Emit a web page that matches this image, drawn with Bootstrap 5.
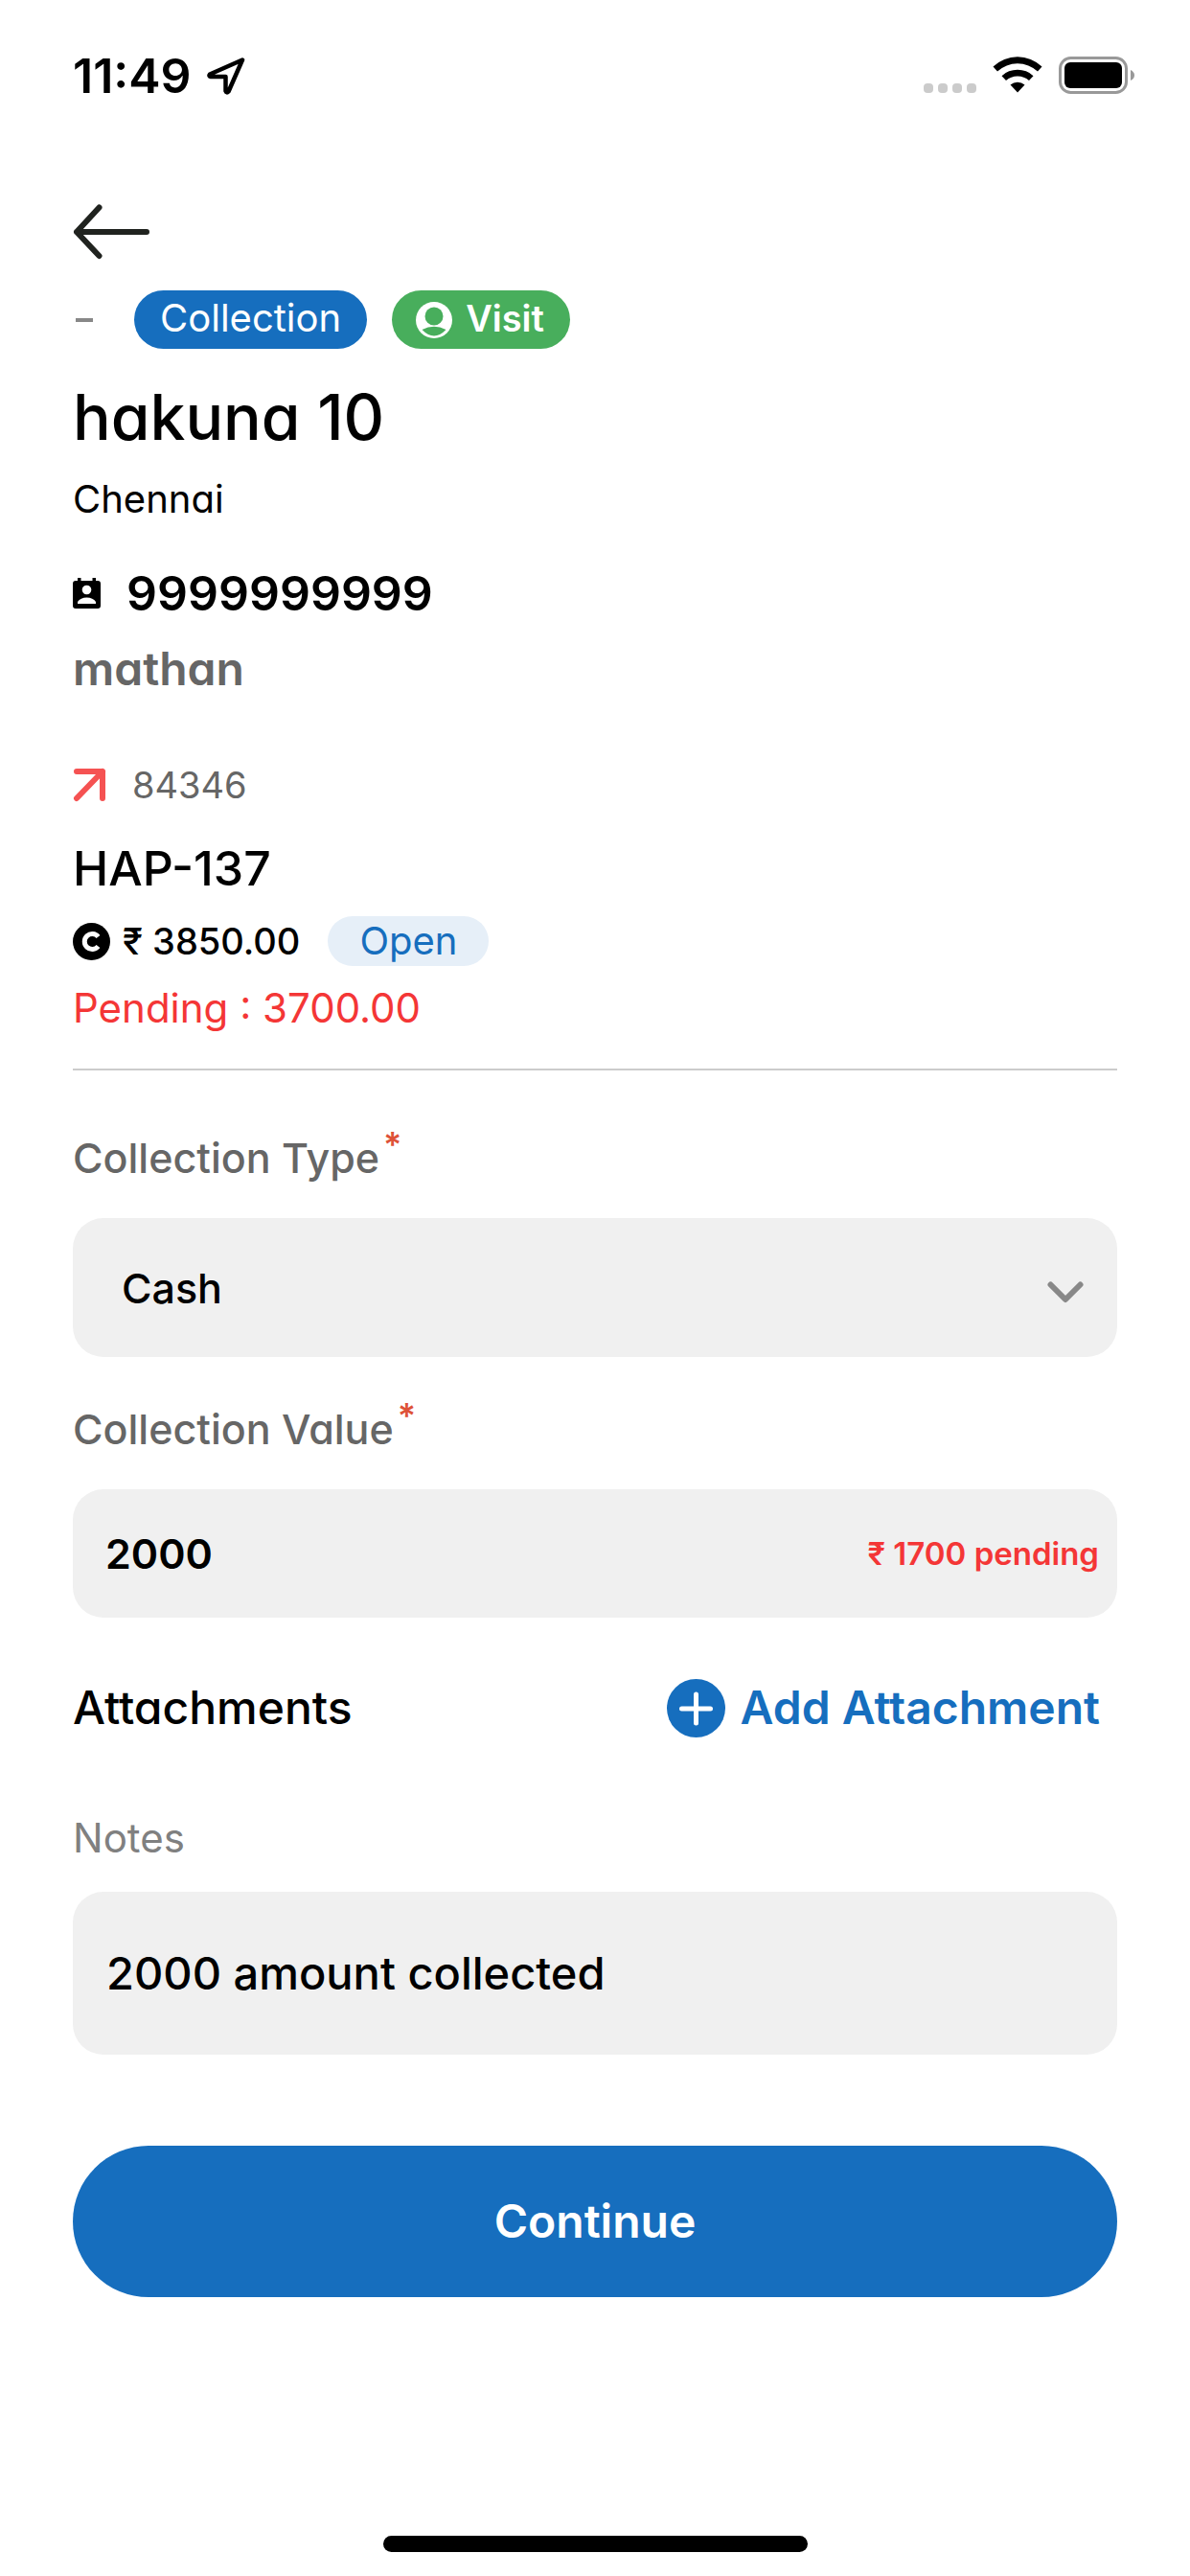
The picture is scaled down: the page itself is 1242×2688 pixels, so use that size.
<!DOCTYPE html>
<html lang="en">
<head>
<meta charset="utf-8">
<meta name="viewport" content="width=device-width, initial-scale=1">
<title>Collection</title>
<link href="https://cdn.jsdelivr.net/npm/bootstrap@5.3.0/dist/css/bootstrap.min.css" rel="stylesheet">
<style>
  :root { --brand: #166ebe; --field: #f0f0f0; --muted: #666; --alert: #f43636; }
  body { font-family: Inter, "Noto Sans", sans-serif; font-feature-settings: "cv11"; color: #000; background: #fff; }
  svg { display: block; flex: none; }
  .gutter { padding-left: 76px; padding-right: 76px; }
  .status { height: 158px; padding-right: 57px; }
  .status-icons { gap: 16px; }
  .screen { padding-top: 55px; }
  .fs-title { font-size: 66px; line-height: 80px; font-weight: 500; margin: 31px 0 22px; }
  .fs-xl { font-size: 50px; line-height: 60px; }
  .fs-lg { font-size: 48px; line-height: 58px; }
  .fs-entry { font-size: 47px; line-height: 58px; }
  .fs-label { font-size: 43px; line-height: 54px; }
  .fs-md { font-size: 40px; line-height: 48px; }
  .fs-note { font-size: 42px; line-height: 50px; }
  .fs-sm { font-size: 38px; line-height: 48px; }
  .fs-xs { font-size: 33px; line-height: 40px; }
  .fw-mid { font-weight: 500; }
  .c-muted { color: var(--muted); }
  .c-soft { color: #808080; }
  .c-alert { color: var(--alert); }
  .c-brand { color: var(--brand); }
  .tags { margin-top: 32px; gap: 26px; }
  .dash { width: 18px; height: 4px; background: #888; margin: 0 17px 0 3px; }
  .tag { height: 61px; padding-bottom: 3px; color: #fff; }
  .tag-collection { background: var(--brand); padding-left: 27px; padding-right: 27px; }
  .tag-visit { background: #48ae5c; padding-left: 25px; padding-right: 27px; gap: 14px; }
  .phone { margin-top: 44px; gap: 27px; }
  .person { margin-top: 20px; }
  .ref { margin-top: 68px; gap: 27px; }
  .bill { margin-top: 33px; }
  .amount { margin-top: 20px; gap: 13px; }
  .state { background: #e6eff8; height: 52px; padding: 0 33px; margin-left: 16px; line-height: 52px; }
  .due { margin-top: 19px; }
  .rule { margin: 38px 0 64px; border-top: 2px solid #ccc; opacity: 1; }
  .req { color: #de5238; font-size: 36px; font-weight: 600; line-height: 26px; margin-left: 4px; }
  .box { background: var(--field); border-radius: 32px; margin-top: 36px; }
  .box select, .box input { border: 0; background: transparent; appearance: none; color: #000; outline: 0; padding: 0; min-width: 0; }
  .box-type { height: 145px; padding: 0 35px 0 51px; margin-bottom: 48px; }
  .box-value { height: 134px; padding: 0 19px 0 34px; }
  .box-notes { height: 170px; padding: 0 35px; margin-top: 31px; }
  .attach { margin-top: 63px; margin-bottom: 80px; padding-right: 18px; }
  .attach button { gap: 16px; height: 62px; }
  .go { background: var(--brand); color: #fff; height: 158px; margin-top: 95px; }
  .home { width: 443px; height: 17px; background: #000; margin-bottom: 25px; }
</style>
</head>
<body>
<div class="min-vh-100 d-flex flex-column">
  <header class="status gutter d-flex align-items-center justify-content-between">
    <div class="d-flex align-items-center gap-3">
      <span class="fs-xl fw-semibold">11:49</span>
      <svg width="40" height="40" viewBox="0 0 40 40" fill="none" stroke="#000" stroke-width="4.500" stroke-linejoin="round" aria-hidden="true"><path d="M37 3.500 3 18.500Q1.500 20.500 4 21H19.500V36Q20.500 38.500 22.500 36.500Z"/></svg>
    </div>
    <div class="status-icons d-flex align-items-center">
      <svg width="55" height="40" viewBox="0 0 55 40" fill="#cbcbcb" aria-hidden="true"><rect y="28" width="10" height="10" rx="4"/><rect x="15" y="28" width="10" height="10" rx="4"/><rect x="30" y="28" width="10" height="10" rx="4"/><rect x="45" y="28" width="10" height="10" rx="4"/></svg>
      <svg width="54" height="40" viewBox="0 0 54 40" aria-hidden="true">
        <path d="M1.500 10.500A37 37 0 0 1 52.500 10.500L48 15.500A31 31 0 0 0 6 15.500Z"/>
        <path d="M10.500 20.200A24 24 0 0 1 43.500 20.200L39 25A18 18 0 0 0 15 25Z"/>
        <path d="M19.500 29.500A11.500 11.500 0 0 1 34.500 29.500L27 37.500Z"/>
      </svg>
      <svg width="80" height="40" viewBox="0 0 80 40" aria-hidden="true"><rect x="1.500" y="1.500" width="69" height="36" rx="11" fill="none" stroke="#999" stroke-width="3"/><rect x="6" y="6" width="60" height="27" rx="6"/><path d="M75 14V25Q79 23 79 19.500T75 14Z" fill="#999"/></svg>
    </div>
  </header>

  <main class="screen gutter">
    <a href="#" class="d-inline-block align-top" aria-label="Back">
      <svg width="81" height="58" viewBox="0 0 81 58" fill="none" stroke="#20231f" stroke-width="6" stroke-linecap="round" stroke-linejoin="round"><path d="M77 29H4M27.500 3.500 4 29 27.500 54"/></svg>
    </a>

    <div class="tags d-flex align-items-center">
      <span class="dash"></span>
      <span class="tag tag-collection fs-md rounded-pill d-flex align-items-center">Collection</span>
      <span class="tag tag-visit fs-sm fw-semibold rounded-pill d-flex align-items-center">
        <svg class="mt-1" width="38" height="38" viewBox="0 0 38 38" aria-hidden="true"><circle cx="19" cy="19" r="19" fill="#fff"/><circle cx="19" cy="15" r="9.500" fill="#48ae5c"/><path d="M6.500 29Q19 22.500 31.500 29 19 42 6.500 29Z" fill="#48ae5c"/></svg>
        Visit
      </span>
    </div>

    <h1 class="fs-title">hakuna 10</h1>
    <div class="fs-md">Chennai</div>
    <div class="phone d-flex align-items-center">
      <svg width="29" height="32" viewBox="0 0 29 32" aria-hidden="true"><path d="M5 0H8.500V3H20.500V0H24V3H26Q29 3 29 6V29Q29 32 26 32H3Q0 32 0 29V6Q0 3 3 3H5Z"/><circle cx="14.500" cy="12.500" r="4.800" fill="#fff"/><path d="M5 27V25Q8 20.500 14.500 20.500T24 25V27Z" fill="#fff"/></svg>
      <span class="fs-xl fw-semibold">9999999999</span>
    </div>
    <div class="person fs-lg fw-semibold c-muted">mathan</div>

    <div class="ref d-flex align-items-center">
      <svg width="35" height="36" viewBox="0 0 35 36" fill="none" stroke="#f55252" stroke-width="6" stroke-linecap="round" stroke-linejoin="round" aria-hidden="true"><path d="M4 4H31V32M31 4 4 32"/></svg>
      <span class="fs-sm c-muted">84346</span>
    </div>
    <div class="bill fs-xl fw-mid">HAP-137</div>
    <div class="amount d-flex align-items-center">
      <svg width="39" height="39" viewBox="0 0 39 39" aria-hidden="true"><circle cx="19.500" cy="19.500" r="19.500"/><path d="M26.500 14.500A8 8 0 1 0 26.500 24.500" fill="none" stroke="#fff" stroke-width="5"/></svg>
      <span class="fs-sm fw-mid">₹ 3850.00</span>
      <span class="state fs-md c-brand rounded-pill">Open</span>
    </div>
    <div class="due fs-note c-alert">Pending : 3700.00</div>

    <hr class="rule">

    <form>
      <label for="type" class="fs-label fw-mid c-muted d-flex align-items-start">Collection Type<span class="req">*</span></label>
      <div class="box box-type d-flex align-items-center">
        <select id="type" class="flex-grow-1 fs-label fw-mid"><option>Cash</option></select>
        <svg width="38" height="32" viewBox="0 0 38 32" fill="none" stroke="#888" stroke-width="6" stroke-linecap="round" stroke-linejoin="round" aria-hidden="true"><path d="M3.500 12.500 19 28 34.500 12.500"/></svg>
      </div>

      <label for="value" class="fs-label fw-mid c-muted d-flex align-items-start">Collection Value<span class="req">*</span></label>
      <div class="box box-value d-flex align-items-center">
        <input id="value" type="text" inputmode="numeric" value="2000" class="flex-grow-1 fs-label fw-semibold">
        <span class="fs-xs fw-semibold c-alert text-nowrap">₹ 1700 pending</span>
      </div>

      <div class="attach d-flex align-items-center justify-content-between">
        <span class="fs-lg fw-mid">Attachments</span>
        <button type="button" class="btn border-0 p-0 fs-lg fw-semibold c-brand d-flex align-items-center">
          <svg width="61" height="61" viewBox="0 0 61 61" aria-hidden="true"><circle cx="30.500" cy="30.500" r="30.500" fill="#166ebe"/><path d="M30.500 16V46M15.500 31H45.500" stroke="#fff" stroke-width="5" stroke-linecap="round"/></svg>
          Add Attachment
        </button>
      </div>

      <label for="notes" class="fs-note d-block c-soft">Notes</label>
      <div class="box box-notes d-flex align-items-center">
        <input id="notes" type="text" value="2000 amount collected" class="flex-grow-1 fs-entry fw-mid">
      </div>

      <button type="submit" class="go btn border-0 rounded-pill w-100 fs-lg fw-semibold">Continue</button>
    </form>
  </main>

  <div class="home rounded-pill mt-auto mx-auto"></div>
</div>
<script src="https://cdn.jsdelivr.net/npm/bootstrap@5.3.0/dist/js/bootstrap.bundle.min.js"></script>
</body>
</html>
